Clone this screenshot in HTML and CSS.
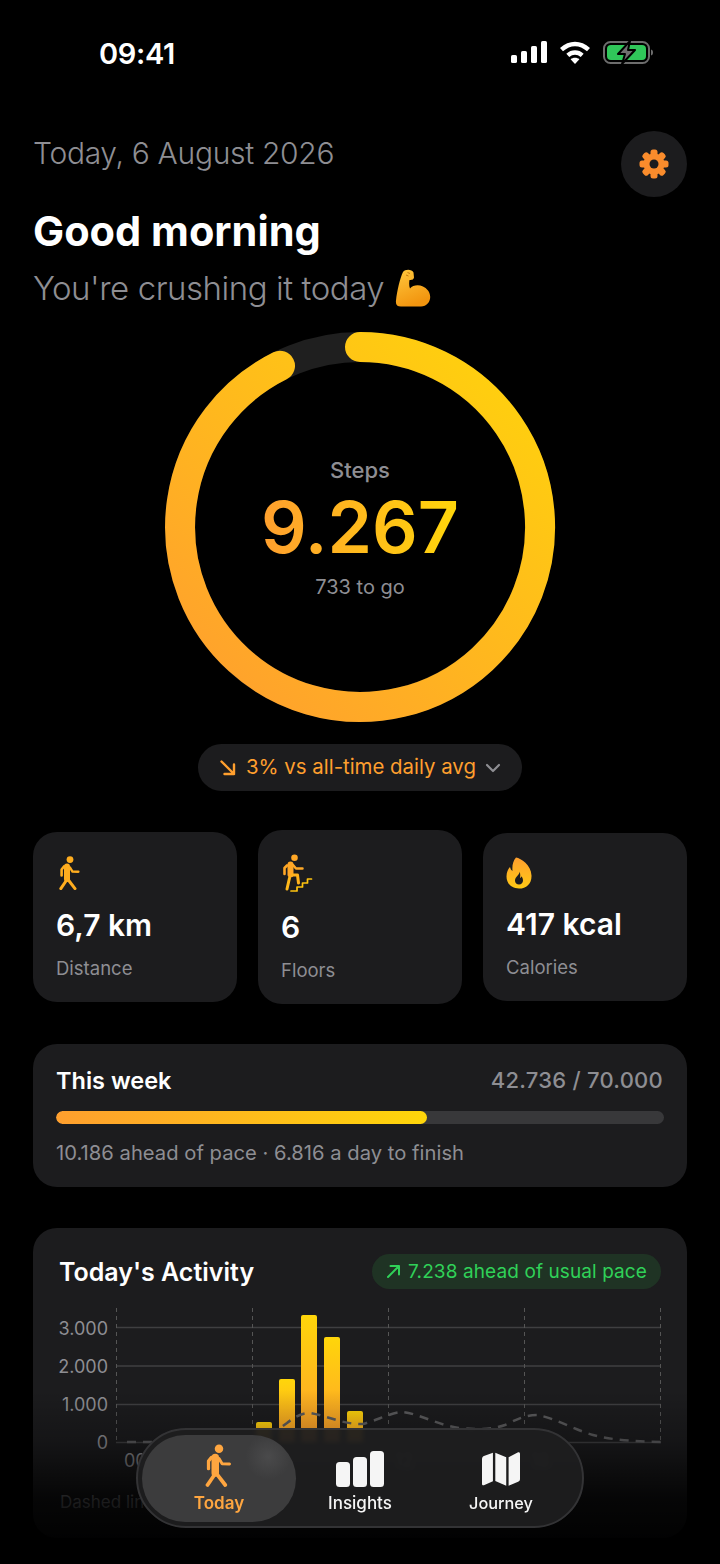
FILE: index.html
```html
<!DOCTYPE html>
<html lang="en">
<head>
<meta charset="utf-8">
<title>Today</title>
<link rel="stylesheet" href="styles.css">
</head>
<body>
<svg class="defs" width="0" height="0" aria-hidden="true">
  <defs>
    <linearGradient id="amber" x1="0" y1="0" x2="0" y2="1"><stop offset="0" stop-color="#ffa128"/><stop offset="1" stop-color="#ffc70c"/></linearGradient>
    <linearGradient id="flame" x1="0" y1="0" x2="0" y2="1"><stop offset="0" stop-color="#ff9f2e"/><stop offset="1" stop-color="#ffc915"/></linearGradient>
    <linearGradient id="ringGrad" gradientUnits="userSpaceOnUse" x1="60" y1="390" x2="390" y2="10"><stop offset="0" stop-color="#ff9f2e"/><stop offset="1" stop-color="#ffd60a"/></linearGradient>
    <linearGradient id="barGrad" x1="0" y1="0" x2="0" y2="1"><stop offset="0" stop-color="#ffd60a"/><stop offset="1" stop-color="#ff9f2e"/></linearGradient>
    <linearGradient id="arm" x1="0" y1="0" x2="0.4" y2="1"><stop offset="0" stop-color="#ffc83d"/><stop offset="1" stop-color="#f2950f"/></linearGradient>
    <symbol id="walker" viewBox="0 0 24 34">
      <circle cx="12" cy="3.600" r="3.400" fill="currentColor" stroke="none"/>
      <g fill="none" stroke="currentColor" stroke-linecap="round" stroke-linejoin="round">
        <path d="M9 10.500 9 23" stroke-width="6"/>
        <path d="M6 10.500 3.600 13.500 3.600 19.500" stroke-width="2.600"/>
        <path d="M12 11.500 14.500 15.600 20.400 15.800" stroke-width="2.400"/>
        <path d="M10 23.500 17 32.600" stroke-width="3"/>
        <path d="M8 25 2.800 32.600" stroke-width="3"/>
      </g>
    </symbol>
  </defs>
</svg>
<div class="app">
  <header class="status">
    <span class="time">09:41</span>
    <div class="status-icons">
      <svg class="sig" width="36" height="22" viewBox="0 0 36 22"><rect x="0" y="14" width="6" height="8" rx="1.600"/><rect x="10" y="10" width="6" height="12" rx="1.600"/><rect x="20" y="5" width="6" height="17" rx="1.600"/><rect x="30" y="0" width="6" height="22" rx="1.600"/></svg>
      <svg class="wifi" width="32" height="23" viewBox="0 0 32 23"><path d="M2.500 8.700C6 5.500 10.800 3 16 3s10 2.500 13.500 5.700"/><path d="M8.800 14.400c1.900-1.700 4.400-2.900 7.200-2.900s5.300 1.200 7.200 2.900"/><path class="dot" d="M16 23l-4.400-4.800c1.200-1 2.700-1.500 4.400-1.500s3.200.5 4.400 1.500z"/></svg>
      <svg class="batt" width="50" height="23" viewBox="0 0 50 23">
        <rect x="1" y="1" width="45" height="21" rx="6.500" fill="none" stroke="#6d6d6d" stroke-width="2"/>
        <rect x="4" y="4" width="39" height="15" rx="4" fill="#30c75a"/>
        <path d="M48 8.500c1.500.4 2 1.500 2 3s-.5 2.600-2 3z" fill="#6d6d6d"/>
        <path d="M27 0 15 13h7l-3 10 13-14h-7z" fill="#6f6f6f" stroke="#000" stroke-width="2" stroke-linejoin="round"/>
      </svg>
    </div>
  </header>

  <main class="content">
    <section class="head">
      <div class="head-row">
        <p class="date">Today, 6 August 2026</p>
        <button class="gear-btn" aria-label="Settings">
          <svg width="30" height="30" viewBox="0 0 30 30">
            <g fill="#fa8c2c">
              <rect x="11.500" y="0.500" width="7" height="29" rx="2.500"/>
              <rect x="11.500" y="0.500" width="7" height="29" rx="2.500" transform="rotate(45 15 15)"/>
              <rect x="11.500" y="0.500" width="7" height="29" rx="2.500" transform="rotate(90 15 15)"/>
              <rect x="11.500" y="0.500" width="7" height="29" rx="2.500" transform="rotate(135 15 15)"/>
            </g>
            <circle cx="15" cy="15" r="7.500" fill="none" stroke="#fa8c2c" stroke-width="6"/>
            <circle cx="15" cy="15" r="4.500" fill="#1c1c1e"/>
          </svg>
        </button>
      </div>
      <h1 class="greet">Good morning</h1>
      <p class="sub">You're crushing it today
        <svg class="arm" width="36" height="38" viewBox="0 0 36 38"><path fill="url(#arm)" d="M8 3C10 0 17 0 18.500 3.500l.5 5c-.5 2.500-3 2.500-4.500 2.500-.5 3-.5 6 .5 8.500 4-4.500 12.500-4.500 18 2 5 7 1 16-7 16H6c-4 0-5.500-2-5-6C2 22 5 9 8 3z"/><path d="M12.500 3.500l2.500 1M11 6l2.500 1" stroke="#c47a10" stroke-width="1" fill="none"/></svg>
      </p>
    </section>

    <section class="ring-wrap">
      <svg class="ring" width="400" height="400" viewBox="0 0 400 400">
        <circle cx="200" cy="200" r="180" fill="none" stroke="#1f1f1f" stroke-width="30"/>
        <path d="M200 20A180 180 0 1 1 120 38.800" fill="none" stroke="url(#ringGrad)" stroke-width="30" stroke-linecap="round"/>
      </svg>
      <div class="ring-text">
        <span class="ring-label">Steps</span>
        <span class="ring-value">9.267</span>
        <span class="ring-sub">733 to go</span>
      </div>
    </section>

    <div class="avg-row">
      <div class="avg-pill">
        <svg width="18" height="18" viewBox="0 0 18 18" fill="none" stroke="#ff9f2e" stroke-width="2.400" stroke-linecap="round" stroke-linejoin="round"><path d="M2.500 2.500 15 15M15 5.500V15H5.500"/></svg>
        <span>3% vs all-time daily avg</span>
        <svg width="16" height="10" viewBox="0 0 16 10" fill="none" stroke="#8e8e93" stroke-width="2.200" stroke-linecap="round" stroke-linejoin="round"><path d="M2 2l6 6 6-6"/></svg>
      </div>
    </div>

    <section class="stats">
      <article class="stat">
        <svg class="stat-icon walk" width="24" height="34"><use href="#walker"/></svg>
        <div class="stat-value">6,7 km</div>
        <div class="stat-label">Distance</div>
      </article>
      <article class="stat">
        <svg class="stat-icon stairs" width="32" height="38" viewBox="0 0 32 38" fill="none">
          <circle cx="13.500" cy="3.800" r="3.300" fill="#ffa726"/>
          <g stroke-linecap="round" stroke-linejoin="round">
            <path d="M9.500 10.500v10" stroke="#ffa726" stroke-width="6"/>
            <path d="M6 11.500 3.500 14v6" stroke="#ffa726" stroke-width="2.600"/>
            <path d="M12 11 15 14.500h6.500" stroke="#ffa928" stroke-width="2.500"/>
            <path d="M11 21h5.500l1 8" stroke="#ffb21c" stroke-width="3"/>
            <path d="M8.500 24 6 35" stroke="#ffb81a" stroke-width="3"/>
            <path d="M10 37h6v-4h5.500v-4h5v-4h4" stroke="#ffc40f" stroke-width="1.700"/>
          </g>
        </svg>
        <div class="stat-value">6</div>
        <div class="stat-label">Floors</div>
      </article>
      <article class="stat">
        <svg class="stat-icon fire" width="26" height="32" viewBox="0 0 26 31">
          <path fill="url(#flame)" fill-rule="evenodd" d="M10 0c5 1 15 7 15.500 18 .3 8-5 13-12.500 13S.5 26 .5 19C.5 15 2 11.500 4 9.500c.5 2 1.200 3 2.500 4C6 8 7 3.500 10 0zM13.500 14c.5 3-4.500 5-4.500 9.200 0 2.300 1.800 3.800 4 3.800 2.500 0 4-1.800 4-4 0-2.300-1-3.500-1.700-4.300-.2 1-.6 1.500-1.300 1.800.5-2.500.3-4.800-.5-6.500z"/>
        </svg>
        <div class="stat-value">417 kcal</div>
        <div class="stat-label">Calories</div>
      </article>
    </section>

    <section class="week">
      <div class="week-top">
        <h2 class="week-title">This week</h2>
        <span class="week-count">42.736 / 70.000</span>
      </div>
      <div class="track"><div class="fill" style="width:61.05%"></div></div>
      <p class="week-note">10.186 ahead of pace · 6.816 a day to finish</p>
    </section>

    <section class="activity">
      <div class="activity-top">
        <h2 class="activity-title">Today's Activity</h2>
        <div class="pace">
          <svg width="15" height="15" viewBox="0 0 15 15" fill="none" stroke="#30d158" stroke-width="2" stroke-linecap="round" stroke-linejoin="round"><path d="M2 13 13 2M4.500 2H13v8.500"/></svg>
          <span>7.238 ahead of usual pace</span>
        </div>
      </div>
      <svg class="chart" width="654" height="170" viewBox="33 1300 654 170">
        <g class="grid-h">
          <path d="M116 1327.500H661M116 1366H661M116 1404.500H661M116 1442.500H661"/>
        </g>
        <g class="grid-v">
          <path d="M116.500 1308V1442M252.500 1308V1442M388.500 1308V1442M524.500 1308V1442M660.500 1308V1442"/>
        </g>
        <g class="y-labels">
          <text x="108" y="1335">3.000</text>
          <text x="108" y="1373">2.000</text>
          <text x="108" y="1411">1.000</text>
          <text x="108" y="1449">0</text>
        </g>
        <g class="x-labels">
          <text x="124" y="1467">00</text>
          <text x="260" y="1467">06</text>
          <text x="395" y="1467">12</text>
          <text x="531" y="1467">18</text>
        </g>
        <g fill="url(#barGrad)">
          <rect x="256" y="1422" width="16" height="20" rx="2"/>
          <rect x="279" y="1379" width="16" height="63" rx="2"/>
          <rect x="301" y="1315" width="16" height="127" rx="2"/>
          <rect x="324" y="1337" width="16" height="105" rx="2"/>
          <rect x="347" y="1411" width="16" height="31" rx="2"/>
        </g>
        <path class="usual" d="M127 1442H245C262 1441 272 1434 287 1423C296 1416 302 1413 310 1413C328 1416 345 1425 363 1424C378 1420 392 1412 403 1412C420 1414 440 1426 460 1428C480 1430 494 1429 505 1425C516 1420 524 1415 537 1415C555 1418 575 1430 593 1435C612 1440 630 1441 661 1442"/>
      </svg>
      <p class="chart-note">Dashed line is your usual course</p>
    </section>
  </main>

  <div class="fade"></div>

  <nav class="tabs">
    <a class="tab active">
      <svg width="30" height="43"><use href="#walker"/></svg>
      <span>Today</span>
    </a>
    <a class="tab">
      <svg width="48" height="36" viewBox="0 0 48 36"><rect x="0" y="11" width="14" height="25" rx="3.500"/><rect x="17" y="6" width="14" height="30" rx="3.500"/><rect x="34" y="0" width="14" height="36" rx="3.500"/></svg>
      <span>Insights</span>
    </a>
    <a class="tab">
      <svg width="38" height="36" viewBox="0 0 40 36"><path d="M11.500 1 11.500 31 2 35C.8 35.300 0 34.800 0 33.500V7.500C0 6 .6 5 2 4.200zM14 1 25.500 5.500V35.500L14 30.500zM28 5.500 37.500.6C39 0 40 .6 40 2V28.500C40 30 39.300 30.800 38 31.300L28 35.500z"/></svg>
      <span class="journey">Journey</span>
    </a>
  </nav>
</div>
</body>
</html>
```

FILE: styles.css
```css
* { box-sizing: border-box; }
html, body { margin: 0; padding: 0; background: #000; }
body { font-family: Inter, "Liberation Sans", sans-serif; color: #fff; }
.defs { position: absolute; }
h1, h2, p { margin: 0; }

.app { position: relative; width: 720px; height: 1564px; overflow: hidden; background: #000; }

.status { display: flex; justify-content: space-between; align-items: center; height: 42px; margin-top: 32px; padding: 0 67px 0 99px; }
.time { font-size: 29px; font-weight: 600; letter-spacing: -0.3px; }
.status-icons { display: flex; align-items: center; gap: 12px; padding-bottom: 2px; }
.sig { fill: #fff; }
.wifi { fill: none; stroke: #fff; stroke-width: 4.4; }
.wifi .dot { fill: #fff; stroke: none; }

.content { padding: 0 33px; }

.head-row { display: flex; justify-content: space-between; align-items: flex-start; margin-top: 57px; margin-bottom: -30px; }
.date { font-size: 30px; font-weight: 300; color: #8e8e93; line-height: 44px; letter-spacing: -0.3px; }
.gear-btn { width: 66px; height: 66px; border: 0; padding: 0; border-radius: 50%; background: #1c1c1e; display: flex; align-items: center; justify-content: center; }
.greet { font-size: 41.5px; font-weight: 700; line-height: 50px; margin-top: 39px; }
.sub { display: flex; align-items: center; gap: 11px; font-size: 33px; font-weight: 300; color: #8e8e93; line-height: 44px; margin-top: 10px; letter-spacing: -0.45px; }
.head { position: relative; }

.ring-wrap { position: relative; width: 400px; height: 400px; margin: 17px auto 0; }
.ring { display: block; }
.ring-text { position: absolute; inset: 0; display: flex; flex-direction: column; align-items: center; justify-content: center; padding-top: 2px; }
.ring-label { font-size: 22px; font-weight: 500; color: #8e8e93; line-height: 26px; margin-bottom: 2px; }
.ring-value { font-size: 71.5px; font-weight: 600; line-height: 84px; background: linear-gradient(90deg, #ff9f2e, #ffd60a); -webkit-background-clip: text; background-clip: text; color: transparent; }
.ring-sub { font-size: 20px; color: #8e8e93; line-height: 26px; margin-top: 5px; }

.avg-row { display: flex; justify-content: center; margin-top: 17px; }
.avg-pill { display: flex; align-items: center; gap: 9px; width: 324px; height: 47px; padding: 0 21px; border-radius: 24px; background: #1c1c1e; color: #ff9f2e; font-size: 20.4px; line-height: 45px; white-space: nowrap; }
.avg-pill span { margin-top: -2px; }

.stats { display: flex; align-items: center; gap: 21px; margin-top: 39px; }
.stat { width: 204px; padding: 24px 23px 23px; border-radius: 24px; background: #1c1c1e; }
.stat-icon { display: block; }
.walk { height: 34px; margin-left: 2px; color: #ffad1f; }
.stairs { height: 38px; }
.fire { height: 32px; }
.stat-value { font-size: 30px; font-weight: 600; line-height: 36px; margin-top: 17px; }
.stat-label { font-size: 18.500px; line-height: 22px; margin-top: 14px; color: #8e8e93; }

.week { margin-top: 40px; height: 143px; padding: 21px 24px 0 23px; border-radius: 24px; background: #1c1c1e; }
.week-top { display: flex; justify-content: space-between; align-items: center; height: 30px; }
.week-title { font-size: 23.500px; font-weight: 600; }
.week-count { font-size: 22px; font-weight: 500; letter-spacing: 0.25px; color: #8e8e93; }
.track { height: 13px; margin: 16px -1px 0 0; border-radius: 7px; background: #38383a; overflow: hidden; }
.fill { height: 100%; border-radius: 7px; background: linear-gradient(90deg, #ff9f2e, #ffd60a); }
.week-note { margin-top: 16px; font-size: 20.200px; line-height: 26px; color: #8e8e93; letter-spacing: 0.02px; white-space: nowrap; }

.activity { position: relative; margin-top: 41px; height: 310px; border-radius: 24px; background: #1c1c1e; }
.activity-top { display: flex; justify-content: space-between; align-items: center; padding: 26px 26px 0 27px; }
.activity-title { font-size: 25px; font-weight: 600; margin-left: -1px; }
.pace { display: flex; align-items: center; gap: 7px; height: 35px; padding: 0 14px; border-radius: 18px; background: #1f3324; color: #30d158; font-size: 19px; letter-spacing: 0.1px; white-space: nowrap; }
.chart { display: block; margin-top: 11px; }
.grid-h path { stroke: #3f3f41; stroke-width: 1.500; fill: none; }
.grid-v path { stroke: #555; stroke-width: 1; stroke-dasharray: 4 4; fill: none; }
.y-labels text { font-size: 18px; fill: #8e8e93; text-anchor: end; }
.x-labels text { font-size: 18px; fill: #8e8e93; }
.usual { fill: none; stroke: #5c5c5e; stroke-width: 2.500; stroke-dasharray: 9 7; }
.chart-note { margin: 22px 0 0 27px; font-size: 17px; color: #8e8e93; }

.fade { position: absolute; left: 0; right: 0; bottom: 0; height: 174px; background: linear-gradient(180deg, rgba(0,0,0,0) 0%, rgba(0,0,0,.25) 29%, rgba(0,0,0,.8) 63%, rgba(0,0,0,.93) 86%, rgba(0,0,0,.98) 100%); pointer-events: none; }

.tabs { position: absolute; left: 136px; bottom: 36px; display: flex; width: 448px; height: 100px; padding: 5px 4px 4px; border-radius: 50px; border: 2px solid #333335; background: rgba(30,30,31,.94); backdrop-filter: blur(2px); }
.tab { display: flex; flex-direction: column; align-items: center; justify-content: flex-end; width: 154px; padding-bottom: 9px; gap: 6px; color: #f5f5f5; fill: #f5f5f5; font-size: 17px; font-weight: 500; }
.tab:nth-child(2) { width: 128px; }
.tab:nth-child(3) { width: 154px; }
.tab.active { color: #ffa640; font-weight: 600; border-radius: 44px; background: radial-gradient(circle at 82% 25%, #4a4a4b 0, #3c3c3d 16%); }
.journey { font-size: 16.300px; }
```
